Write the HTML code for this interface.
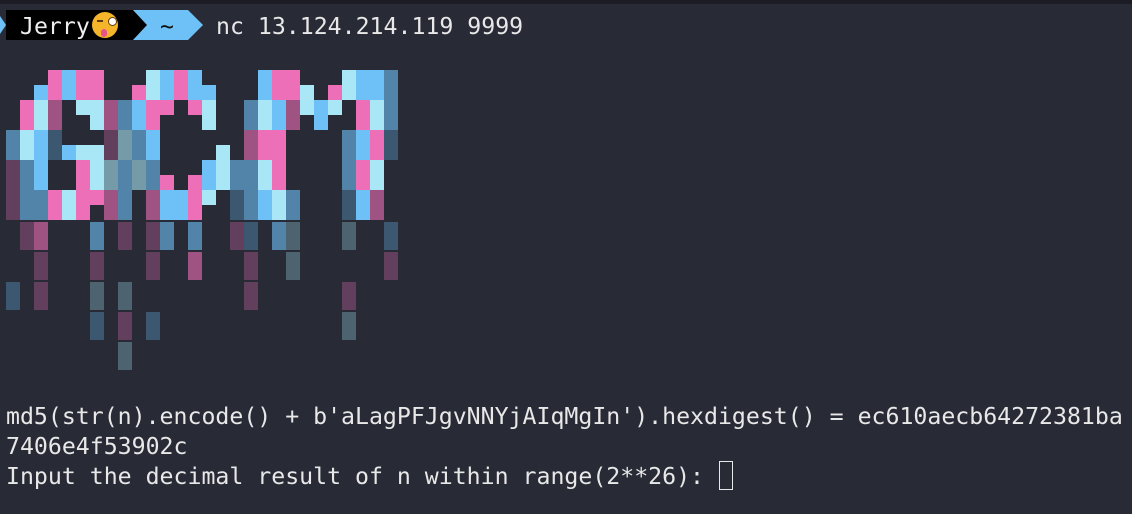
<!DOCTYPE html>
<html><head><meta charset="utf-8"><style>
html,body{margin:0;padding:0}
body{width:1132px;height:514px;background:#282a36;position:relative;overflow:hidden;font-family:"DejaVu Sans Mono","Liberation Mono",monospace;font-size:23.2px;color:#e8e8e8}
.top{position:absolute;left:0;top:0;width:1132px;height:4px;background:#1c1d24}
.t{position:absolute;left:6px;white-space:pre;line-height:30px;height:30px}
.c{position:absolute}
#art{position:absolute;left:0;top:0}
</style></head><body>
<div class="top"></div>
<div style="position:absolute;left:0;top:10px;width:6px;height:30px">
<svg width="6" height="30"><polygon points="0,6 6,15 0,24" fill="#6ec1f7"/></svg></div>
<div style="position:absolute;left:6px;top:10px;width:127px;height:30px;background:#000"></div>
<div class="t" style="top:12px;left:20px;color:#eee">Jerry</div>
<div style="position:absolute;left:92px;top:12px;width:26px;height:26px;border-radius:50%;background:#f5b52a"></div>
<div style="position:absolute;left:108px;top:17px;width:7px;height:7px;border-radius:50%;background:#fff;border:1px solid #5a3a10"></div>
<div style="position:absolute;left:97px;top:20px;width:6px;height:2px;background:#5a3a10"></div>
<div style="position:absolute;left:101px;top:29px;width:6px;height:8px;border-radius:3px;background:#e8548a"></div>
<svg style="position:absolute;left:133px;top:10px" width="70" height="30"><polygon points="0,0 14,15 0,30" fill="#000"/><polygon points="0,0 55,0 70,15 55,30 0,30 14,15" fill="#6ec1f7"/></svg>
<div class="t" style="top:12px;left:160px;color:#111">~</div>
<div class="t" style="top:12px;left:216px">nc 13.124.214.119 9999</div>
<div id="art"></div>
<div class="t" style="top:402px">md5(str(n).encode() + b'aLagPFJgvNNYjAIqMgIn').hexdigest() = ec610aecb64272381ba</div>
<div class="t" style="top:432px">7406e4f53902c</div>
<div class="t" style="top:462px">Input the decimal result of n within range(2**26): </div>
<div style="position:absolute;left:719px;top:461px;width:12px;height:27px;border:1.5px solid #e8e8e8"></div>
<script>
var C={P:"#ec6fb8",B:"#6ec1f7",L:"#a9e7f7"};
var H=[
"3P 4B 5P 6P 10L 11B 12P 13B 18B 19P 20P 24L 25B 26B 27b",
"2B 3P 4B 5P 6P 9P 10L 11B 12P 13B 14B 18B 19P 20P 21L 23P 24L 25B 26B 27b",
"1P 2L 3p 5L 6L 7p 8b 9B 10P 11P 13P 14L 17b 18L 19B 20p 21L 22B 23L 25P 26L 27b",
"1P 2L 3p 6L 7p 8b 9B 10P 14L 17b 18L 19B 20p 22B 25P 26L 27b",
"0b 1L 2B 3s 7q 8l 9b 10B 17p 18P 19P 24b 25B 26P 27s",
"0b 1L 2B 3s 4B 5L 6L 7q 8l 9b 10B 15L 17p 18P 19P 24b 25B 26P 27s",
"0q 1b 2B 5P 6L 7l 8b 9l 10b 14B 15L 16b 17b 18L 19P 24b 25P 26L",
"0q 1b 2B 5P 6L 7l 8b 9l 10b 11P 13P 14B 15L 16b 17b 18L 19P 24b 25P 26L",
"0q 1b 2b 3P 4L 5P 6P 7p 8b 10p 11B 12B 13P 14L 16s 17b 18B 19L 20b 24s 25B 26p",
"0q 1b 2b 3P 4L 5P 7p 8b 10p 11B 12B 13P 16s 17b 18B 19L 20b 24s 25B 26p"
];
var R=[
"1q 2p 6b 8q 10q 11b 13b 16q 17s 19b 20t 24t 27s",
"2q 6q 10q 13p 17q 20t 27q",
"0s 2q 6t 8t 17q 24q",
"6s 8q 10s 24t",
"8t"
];
var out="";
function cell(x,y,h,k){
 var col,op=1;
 if(k=="P"||k=="B"||k=="L")col=C[k];
 else if(k=="p"){col=C.P;op=.6}else if(k=="b"){col=C.B;op=.6}else if(k=="l"){col=C.L;op=.6}
 else if(k=="q"){col=C.P;op=.3}else if(k=="s"){col=C.B;op=.3}else if(k=="t"){col=C.L;op=.3}
 out+='<div class="c" style="left:'+(6+x*14)+'px;top:'+y+'px;width:14px;height:'+h+'px;background:'+col+';opacity:'+op+'"></div>';
}
H.forEach(function(r,i){r.split(" ").forEach(function(t){cell(parseInt(t),70+i*15,15,t.slice(-1));});});
R.forEach(function(r,i){r.split(" ").forEach(function(t){cell(parseInt(t),222+i*30,28,t.slice(-1));});});
document.getElementById("art").innerHTML=out;
</script>
</body></html>
